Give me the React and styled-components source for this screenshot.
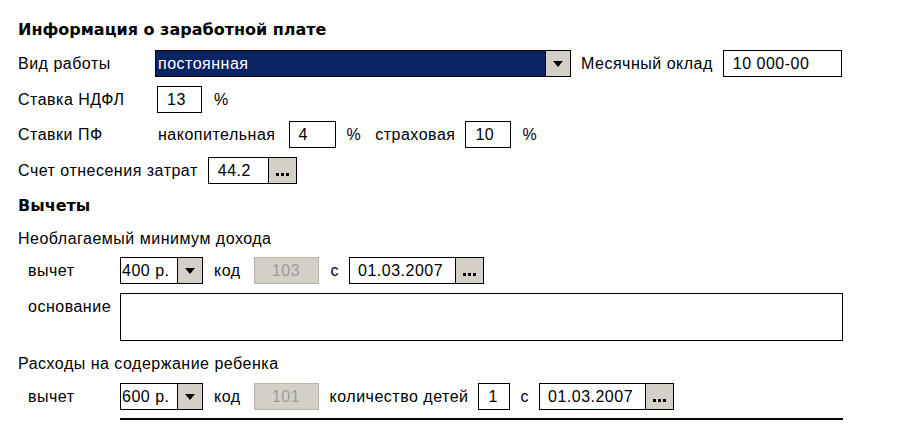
import React from 'react';
import styled, { createGlobalStyle } from 'styled-components';

const GlobalStyle = createGlobalStyle`
  html, body {
    margin: 0;
    padding: 0;
    background: #ffffff;
  }
  body {
    font-family: "Liberation Sans", Arial, sans-serif;
    font-size: 16px;
    letter-spacing: 0.5px;
    color: #000;
  }
`;

const Page = styled.div`
  width: 900px;
  height: 438px;
  box-sizing: border-box;
  padding: 20px 0 0 18px;
  overflow: hidden;
`;

const Heading = styled.div`
  font-family: "DejaVu Sans", Verdana, sans-serif;
  font-weight: bold;
  font-size: 16px;
  letter-spacing: 0;
  height: 20px;
  line-height: 20px;
  margin-bottom: ${p => p.$after || 0}px;
`;

const SubHeading = styled.div`
  height: 20px;
  line-height: 20px;
  margin-bottom: ${p => p.$after || 0}px;
`;

const Row = styled.div`
  display: flex;
  align-items: center;
  height: ${p => p.$h || 27}px;
  margin-bottom: ${p => p.$after || 0}px;
  padding-left: ${p => p.$indent || 0}px;
`;

const TopRow = styled(Row)`
  align-items: flex-start;
`;

const Label = styled.span`
  flex: none;
  width: ${p => (p.$w ? `${p.$w}px` : 'auto')};
  margin-right: ${p => p.$mr ?? 10}px;
  margin-left: ${p => p.$ml || 0}px;
  white-space: nowrap;
  line-height: 27px;
`;

const Box = styled.div`
  flex: none;
  box-sizing: border-box;
  width: ${p => p.$w}px;
  height: ${p => p.$h || 27}px;
  border: 1px solid #000;
  background: #fff;
  display: flex;
  align-items: center;
  padding-left: ${p => p.$pad ?? 9}px;
  margin-right: ${p => p.$mr ?? 10}px;
`;

const DisabledBox = styled(Box)`
  background: #d4d0c8;
  border-color: #b8b4ac;
  color: #9c9c9c;
  justify-content: center;
  padding-left: 0;
`;

const Combo = styled.div`
  flex: none;
  box-sizing: border-box;
  display: flex;
  width: ${p => p.$w}px;
  height: 27px;
  border: 1px solid #000;
  background: ${p => (p.$active ? '#0a2463' : '#fff')};
  color: ${p => (p.$active ? '#fff' : '#000')};
  margin-right: ${p => p.$mr ?? 10}px;
`;

const ComboText = styled.div`
  flex: 1;
  display: flex;
  align-items: center;
  padding-left: ${p => p.$pad ?? 1}px;
  white-space: nowrap;
  overflow: hidden;
`;

const SideButton = styled.div`
  flex: none;
  width: ${p => p.$w || 24}px;
  height: 100%;
  box-sizing: border-box;
  background: #d4d0c8;
  border-left: 1px solid #000;
  display: flex;
  align-items: center;
  justify-content: center;
`;

const Arrow = styled.span`
  width: 0;
  height: 0;
  border-left: 5px solid transparent;
  border-right: 5px solid transparent;
  border-top: 6px solid #000;
`;

const Dots = styled.span`
  display: flex;
  gap: 2px;
  margin-top: 8px;
  & > i {
    width: 3px;
    height: 3px;
    background: #000;
  }
`;

const TextArea = styled.div`
  box-sizing: border-box;
  width: 723px;
  height: 48px;
  border: 1px solid #000;
  background: #fff;
`;

const Rule = styled.div`
  margin-left: 102px;
  width: 723px;
  border-top: 2px solid #000;
`;

const Ellipsis = () => (
  <SideButton $w={28}>
    <Dots><i /><i /><i /></Dots>
  </SideButton>
);

const Dropdown = ({ w, active, children, mr }) => (
  <Combo $w={w} $active={active} $mr={mr}>
    <ComboText $pad={active ? 2 : 1}>{children}</ComboText>
    <SideButton $w={25}><Arrow /></SideButton>
  </Combo>
);

const DateField = ({ value, mr }) => (
  <Combo $w={135} $mr={mr}>
    <ComboText $pad={8}>{value}</ComboText>
    <Ellipsis />
  </Combo>
);

export default function App() {
  return (
    <Page>
      <GlobalStyle />
      <Heading $after={10}>Информация о заработной плате</Heading>

      <Row $after={9}>
        <Label $w={127}>Вид работы</Label>
        <Dropdown w={416} active>постоянная</Dropdown>
        <Label>Месячный оклад</Label>
        <Box $w={119}>10 000-00</Box>
      </Row>

      <Row $after={8}>
        <Label $w={127} $mr={12}>Ставка НДФЛ</Label>
        <Box $w={45} $mr={12}>13</Box>
        <Label>%</Label>
      </Row>

      <Row $after={9}>
        <Label $w={127}>Ставки ПФ</Label>
        <Label $ml={3} $mr={13}>накопительная</Label>
        <Box $w={47} $mr={11}>4</Box>
        <Label $mr={14}>%</Label>
        <Label>страховая</Label>
        <Box $w={46} $mr={11}>10</Box>
        <Label>%</Label>
      </Row>

      <Row $after={12}>
        <Label>Счет отнесения затрат</Label>
        <Combo $w={89}>
          <ComboText $pad={9}>44.2</ComboText>
          <Ellipsis />
        </Combo>
      </Row>

      <Heading $after={13}>Вычеты</Heading>
      <SubHeading $after={8}>Необлагаемый минимум дохода</SubHeading>

      <Row $indent={10} $after={9}>
        <Label $w={82}>вычет</Label>
        <Dropdown w={83} mr={11}>400 р.</Dropdown>
        <Label $mr={13}>код</Label>
        <DisabledBox $w={65} $mr={12}>103</DisabledBox>
        <Label>с</Label>
        <DateField value="01.03.2007" />
      </Row>

      <TopRow $indent={10} $h={48} $after={13}>
        <Label $w={82}>основание</Label>
        <TextArea />
      </TopRow>

      <SubHeading $after={9}>Расходы на содержание ребенка</SubHeading>

      <Row $indent={10} $after={8}>
        <Label $w={82}>вычет</Label>
        <Dropdown w={83} mr={11}>600 р.</Dropdown>
        <Label $mr={13}>код</Label>
        <DisabledBox $w={65} $mr={11}>101</DisabledBox>
        <Label>количество детей</Label>
        <Box $w={32} $mr={10}>1</Box>
        <Label>с</Label>
        <DateField value="01.03.2007" />
      </Row>

      <Rule />
    </Page>
  );
}
